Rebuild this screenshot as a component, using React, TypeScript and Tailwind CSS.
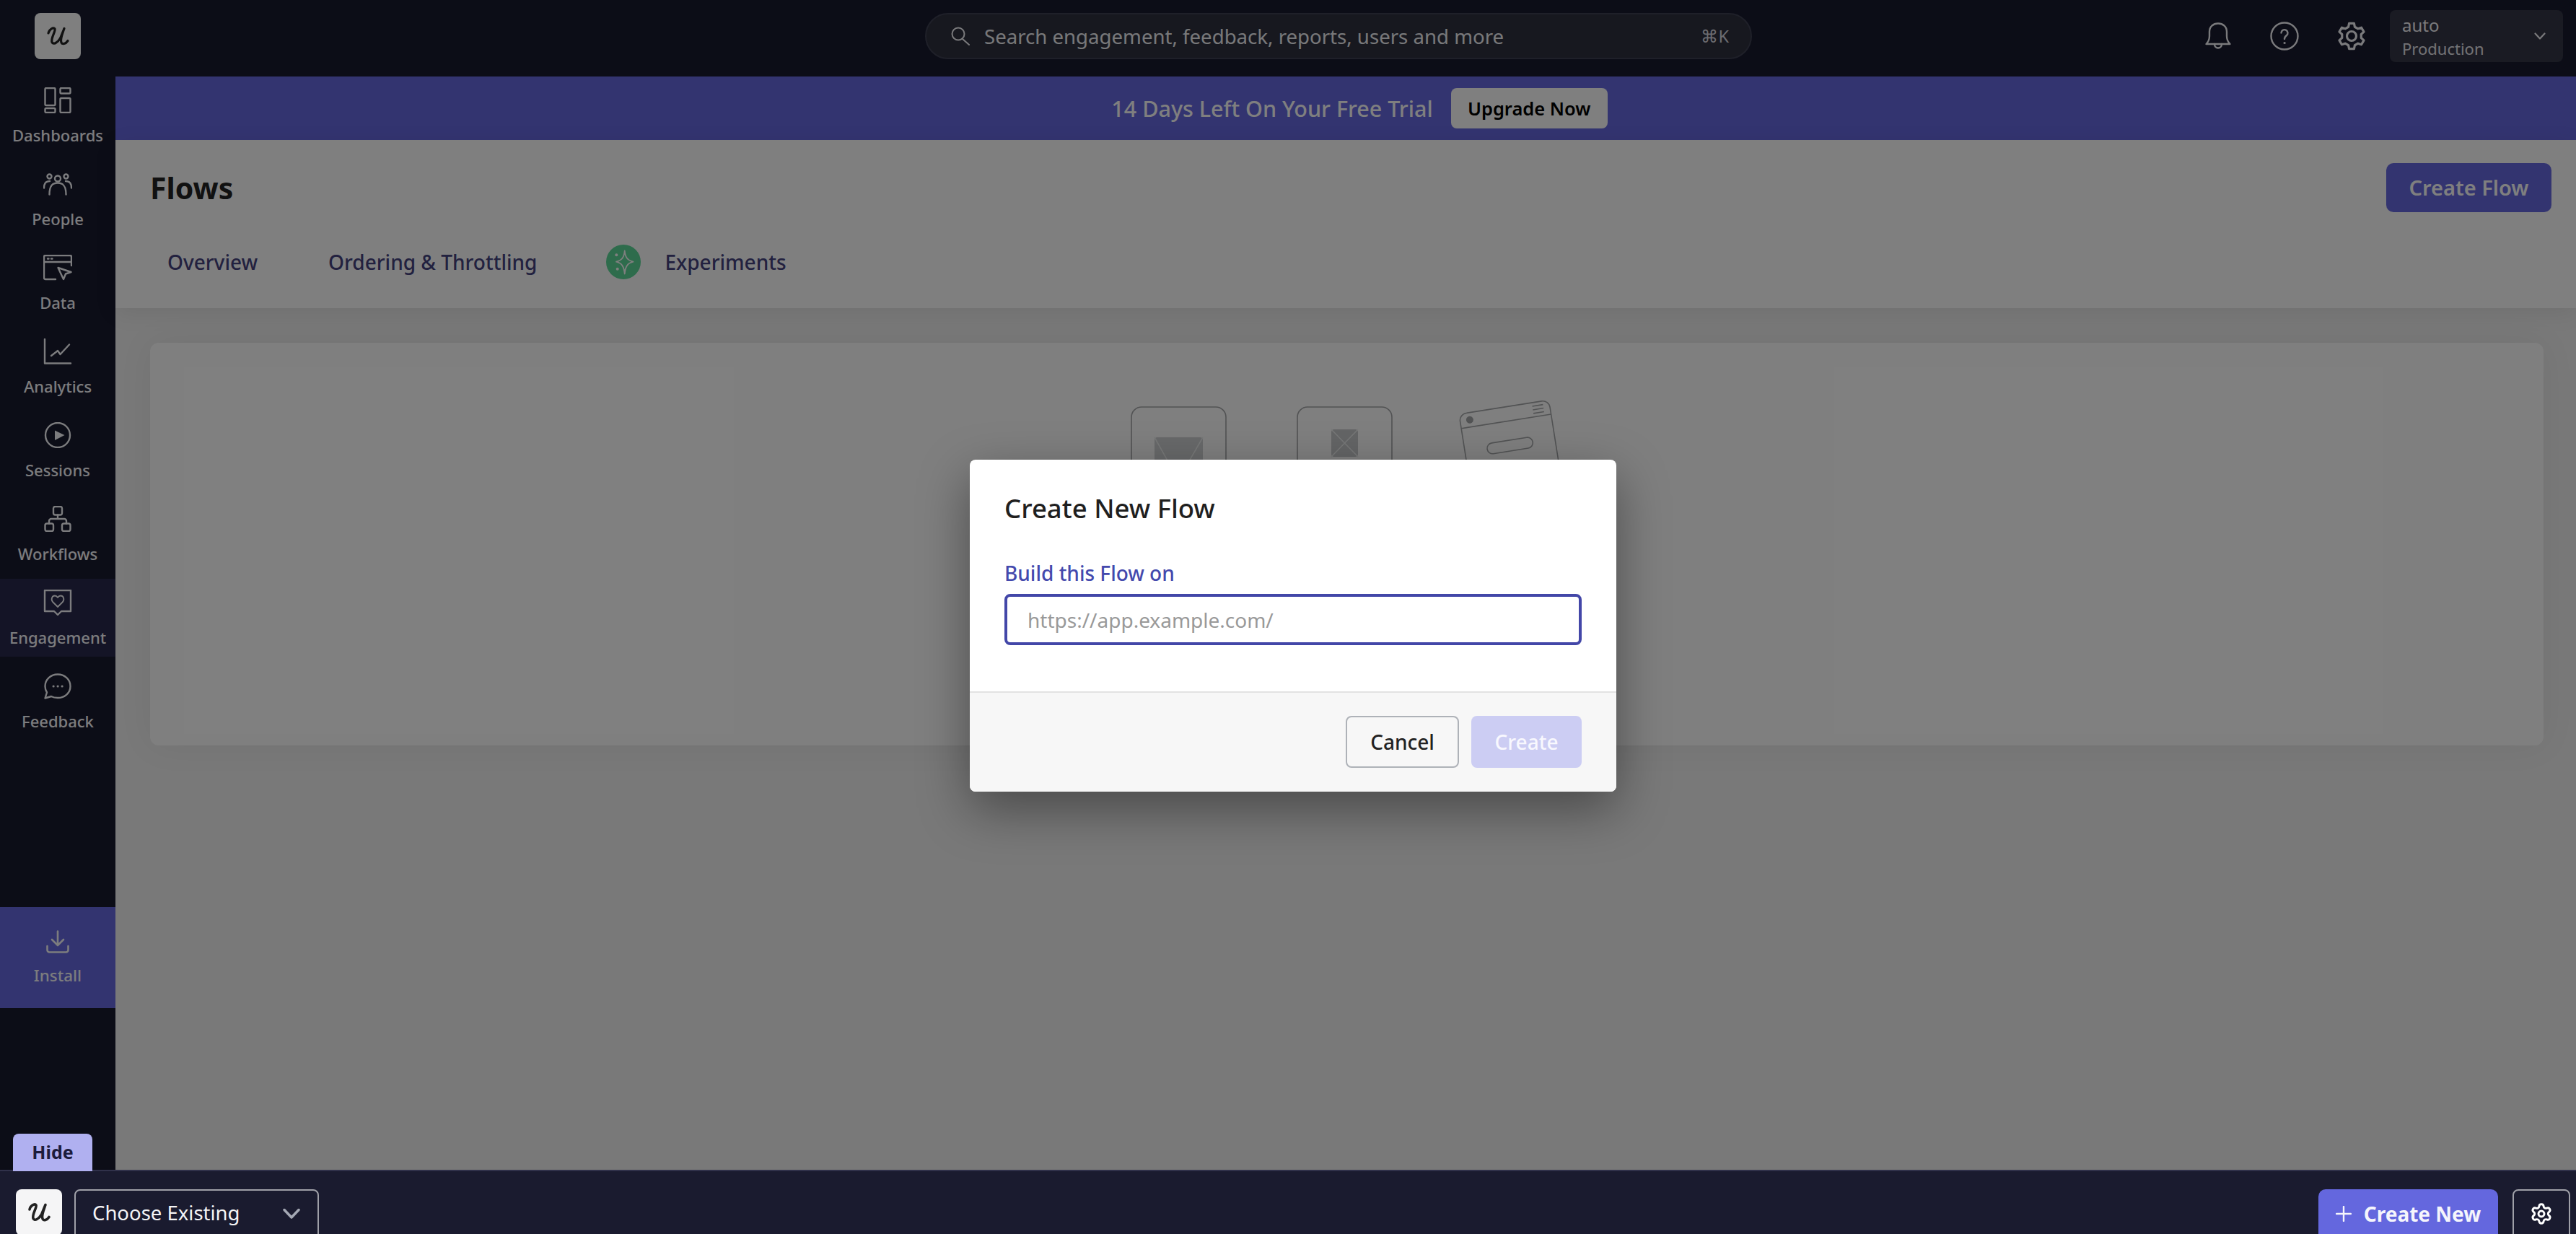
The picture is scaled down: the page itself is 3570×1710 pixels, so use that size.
import { Settings } from 'lucide-react';
import type { ReactNode } from 'react';

function ULogo({ className, strokeWidth = 3 }: { className?: string; strokeWidth?: number }) {
  return (
    <svg viewBox="0 0 64 64" className={className} fill="none" stroke="currentColor" strokeWidth={strokeWidth} strokeLinecap="round" strokeLinejoin="round">
      <path d="M19 28C20 23 26 19 28 22C29.500 25 22 35 24 40.500C26 44.500 32 41 35.500 35L41 21.500C38 30 35 37 37 41C38.500 44 43 43 46 38.500" />
    </svg>
  );
}

// six flat teeth, same shape as the gear in the top bar
function gearPath() {
  const point = (deg: number, r: number) => {
    const a = (deg * Math.PI) / 180;
    return `${(20 + r * Math.cos(a)).toFixed(2)} ${(20 + r * Math.sin(a)).toFixed(2)}`;
  };
  const parts: string[] = [];
  for (let i = 0; i < 6; i++) {
    const a = -90 + 60 * i;
    parts.push(point(a - 19, 13.5), point(a - 11, 18), point(a + 11, 18), point(a + 19, 13.5));
  }
  return `M${parts.join('L')}Z`;
}

function GearIcon() {
  return (
    <svg viewBox="0 0 40 40" className="w-10 h-10" fill="none" stroke="currentColor" strokeWidth="3.2" strokeLinejoin="round">
      <path d={gearPath()} />
      <circle cx="20" cy="20" r="6.500" />
    </svg>
  );
}

function NavIcon({ children }: { children: ReactNode }) {
  return (
    <svg viewBox="0 0 40 36" className="w-10 h-9" fill="none" stroke="currentColor" strokeWidth="2.4" strokeLinecap="round" strokeLinejoin="round">
      {children}
    </svg>
  );
}

const navItems: { label: string; active?: boolean; icon: ReactNode }[] = [
  {
    label: 'Dashboards',
    icon: (
      <>
        <rect x="2.5" y="1" width="14" height="24" rx="1.5" />
        <rect x="23.5" y="1" width="14" height="7.5" rx="1.5" />
        <rect x="2.5" y="29" width="14" height="6" rx="1.5" />
        <rect x="23.5" y="15" width="14" height="20" rx="1.5" />
      </>
    ),
  },
  {
    label: 'People',
    icon: (
      <>
        <circle cx="20" cy="10.5" r="4" />
        <circle cx="8.5" cy="7.5" r="3" />
        <circle cx="31.5" cy="7.5" r="3" />
        <path d="M8.5 32.5C8.5 20 13 16.5 20 16.5C27 16.5 31.5 20 31.5 32.5" />
        <path d="M1 23.5C1 17 4 14 9 14" />
        <path d="M39 23.5C39 17 36 14 31 14" />
      </>
    ),
  },
  {
    label: 'Data',
    icon: (
      <>
        <path d="M17 34H3a2 2 0 0 1-2-2V3a2 2 0 0 1 2-2H37a2 2 0 0 1 2 2V15" />
        <path d="M1 10H39" />
        <path d="M6 5.5H7.5M11 5.5H12.5" />
        <path d="M20.5 18L38.5 24L31 26.5L28 34Z" />
      </>
    ),
  },
  {
    label: 'Analytics',
    icon: (
      <>
        <path d="M2 1V34.5H38" />
        <path d="M11 24L20 17L23.5 22L36 8.5" />
      </>
    ),
  },
  {
    label: 'Sessions',
    icon: (
      <>
        <circle cx="20" cy="18" r="17" />
        <path d="M16 11.5L29.5 18L16 25Z" fill="currentColor" stroke="none" />
      </>
    ),
  },
  {
    label: 'Workflows',
    icon: (
      <>
        <rect x="14" y="1" width="12" height="11.5" rx="2.5" />
        <rect x="2.5" y="24.5" width="11.5" height="10.5" rx="2.5" />
        <rect x="26" y="24.5" width="11.5" height="10.5" rx="2.5" />
        <path d="M20 12.5V18M8 24.5V21a3 3 0 0 1 3-3H29a3 3 0 0 1 3 3V24.5" />
      </>
    ),
  },
  {
    label: 'Engagement',
    active: true,
    icon: (
      <>
        <path d="M2 1H38V30H25L20 35L15 30H2Z" />
        <path d="M20 24L13 17C10 13 12.5 8.5 16 8.5C18 8.5 19 9.5 20 11C21 9.5 22 8.5 24 8.5C27.5 8.5 30 13 27 17Z" strokeWidth="1.8" />
      </>
    ),
  },
  {
    label: 'Feedback',
    icon: (
      <>
        <path d="M20 1.5C29.5 1.5 37.5 8.5 37.5 18C37.5 27.5 29.5 34 20 34C16.5 34 13.5 33.4 11 32L2.5 34.5L5 26.5C3.4 24 2.5 21.2 2.5 18C2.5 8.5 10.5 1.5 20 1.5Z" />
        <path d="M14 18H14.2M20 18H20.2M26 18H26.2" strokeWidth="3" />
      </>
    ),
  },
];

function Sidebar() {
  return (
    <aside className="w-[160px] shrink-0 bg-[#181a2e] flex flex-col text-[#f8f8fc]">
      {navItems.map((item) => (
        <div
          key={item.label}
          className={`h-[108px] mb-2 flex flex-col items-center pt-[15px] ${item.active ? 'bg-[#28284c]' : ''}`}
        >
          <NavIcon>{item.icon}</NavIcon>
          <span className="mt-[14px] text-[22px] leading-8 font-medium">{item.label}</span>
        </div>
      ))}
      <div className="mt-[223px] h-[140px] bg-[#6668e0] flex flex-col items-center pt-8">
        <svg viewBox="0 0 32 32" className="w-8 h-8" fill="none" stroke="currentColor" strokeWidth="2.6" strokeLinecap="round" strokeLinejoin="round">
          <path d="M16 1.5V20M8 13L16 21L24 13" />
          <path d="M1.5 22V27.5a3 3 0 0 0 3 3H27.5a3 3 0 0 0 3-3V22" />
        </svg>
        <span className="mt-[15px] text-[22.4px] leading-8 font-medium">Install</span>
      </div>
    </aside>
  );
}

function TopBar() {
  return (
    <header className="h-[106px] shrink-0 bg-[#181a2e] flex items-start pt-[18px] text-[#f4f4f8]">
      <div className="w-[160px] flex justify-center">
        <div className="w-16 h-16 rounded-lg bg-white text-[#222] flex items-center justify-center">
          <ULogo className="w-16 h-16" strokeWidth={3.2} />
        </div>
      </div>
      <div className="ml-[1122px] w-[1146px] h-16 rounded-full bg-[#2e303e] border-2 border-[#3e4052] flex items-center pl-[33px] pr-[30px]">
        <svg viewBox="0 0 28 26" className="w-7 h-[26px] shrink-0" fill="none" stroke="currentColor" strokeWidth="2" strokeLinecap="round">
          <circle cx="11" cy="10" r="8.5" />
          <path d="M17 17L26 25" />
        </svg>
        <span className="ml-[19px] text-[27.6px] leading-9 text-[#f0f0f4]">Search engagement, feedback, reports, users and more</span>
        <span className="ml-auto text-[23.5px] leading-9 text-[#d8d8e0]">⌘K</span>
      </div>
      <div className="ml-auto flex items-center pr-[18px] -mt-1">
        <svg viewBox="0 0 40 40" className="w-10 h-10" fill="none" stroke="currentColor" strokeWidth="2.4" strokeLinecap="round" strokeLinejoin="round">
          <path d="M3.5 31C6.5 28 8 25 8 20V14C8 7 13 2.5 20 2.5C27 2.5 32 7 32 14V20C32 25 33.5 28 36.5 31Z" />
          <path d="M15 31a5 5.500 0 0 0 10 0" />
        </svg>
        <svg viewBox="0 0 40 40" className="w-10 h-10 ml-[52px]" fill="none" stroke="currentColor" strokeWidth="2.4" strokeLinecap="round" strokeLinejoin="round">
          <circle cx="20" cy="20" r="18.5" />
          <path d="M15.5 15.5a4.500 4.500 0 1 1 7.500 3.500C21 20.500 20 21.500 20 24" />
          <path d="M20 29.500H20.200" strokeWidth="3" />
        </svg>
        <div className="ml-[53px]">
          <GearIcon />
        </div>
        <div className="ml-[33px] w-[240px] h-[72px] rounded-lg bg-[#343646] flex items-center pl-[17px] pr-6">
          <div className="flex flex-col">
            <span className="text-[24px] leading-[34px]">auto</span>
            <span className="text-[22px] leading-[30px] text-[#e4e4ea]">Production</span>
          </div>
          <svg viewBox="0 0 16 10" className="ml-auto w-4 h-[10px]" fill="none" stroke="currentColor" strokeWidth="2.2" strokeLinecap="round" strokeLinejoin="round">
            <path d="M1.500 1.500L8 8.500L14.500 1.500" />
          </svg>
        </div>
      </div>
    </header>
  );
}

function Illustration() {
  return (
    <svg viewBox="0 0 600 145" className="w-[600px] h-[145px] overflow-visible" fill="none" stroke="#a4a6a8" strokeWidth="1.6">
      <rect x="1" y="9" width="131" height="200" rx="14" />
      <rect x="33" y="51" width="67" height="94" rx="4" fill="#d0d2d4" stroke="none" />
      <path d="M33 51L66 110L100 51M33 145L66 110L100 145" stroke="#eef0f0" />
      <rect x="231" y="9" width="131" height="200" rx="14" />
      <rect x="278" y="40" width="37" height="38" rx="4" fill="#c8cacc" stroke="none" />
      <path d="M278 40L315 78M315 40L278 78" stroke="#eef0f0" />
      <g transform="rotate(-9 455 19)">
        <rect x="455" y="19" width="126" height="200" rx="10" />
        <path d="M455 39H581" />
        <circle cx="468.500" cy="29" r="5" fill="#a4a6a8" stroke="none" />
        <path d="M557 24H572M557 29H572M557 34H572" />
        <rect x="486" y="65.500" width="64" height="15" rx="7.500" />
      </g>
    </svg>
  );
}

function MainArea() {
  return (
    <main className="flex-1 min-w-0 flex flex-col bg-[#f2f2f2]">
      <div className="h-[88px] shrink-0 bg-[#6668e0] flex items-center justify-center pl-[49px] pr-[4px]">
        <span className="text-[30.5px] leading-10 font-medium text-white ml-[-7px]">14 Days Left On Your Free Trial</span>
        <button className="ml-[25px] h-14 w-[217px] rounded-lg bg-white text-black text-[25.5px] font-semibold">Upgrade Now</button>
      </div>
      <div className="h-[233px] shrink-0 bg-white shadow-[0_6px_30px_rgba(0,0,0,0.08)] relative pt-8 pl-[48px] pr-[34px]">
        <div className="flex items-center justify-between">
          <h1 className="text-[41px] leading-[68px] font-bold text-[#222]">Flows</h1>
          <button className="w-[229px] h-[68px] rounded-[10px] bg-[#6668e0] text-white text-[29px] font-semibold">Create Flow</button>
        </div>
        <nav className="flex items-center mt-[45px] pl-[24px] h-12 text-[28px] font-medium text-[#44427e]">
          <span>Overview</span>
          <span className="ml-[98px]">Ordering &amp; Throttling</span>
          <span className="ml-[96px] w-12 h-12 rounded-full bg-[#5cd898]">
            <svg viewBox="0 0 48 48" className="w-12 h-12" fill="none" stroke="#fff" strokeWidth="1.8" strokeLinejoin="round">
              <path d="M25.700 8.500C26.500 17 29 21.500 37.500 23.700C29 26 26.500 31 25.700 40.500C24.900 31 22.500 26 14 23.700C22.500 21.500 24.900 17 25.700 8.500Z" />
              <circle cx="14.300" cy="14.300" r="2" fill="#fff" stroke="none" />
              <circle cx="15.700" cy="33.700" r="2" fill="#fff" stroke="none" />
            </svg>
          </span>
          <span className="ml-[33px]">Experiments</span>
        </nav>
      </div>
      <div className="pt-12 pl-[48px] pr-[45px]">
        <div className="h-[558px] rounded-xl bg-white shadow-[0_0_50px_rgba(0,0,0,0.06)] flex justify-center pt-20 overflow-hidden">
          <Illustration />
        </div>
      </div>
    </main>
  );
}

function CreateFlowModal() {
  return (
    <div className="absolute left-[1344px] top-[637px] z-20 w-[896px] h-[460px] rounded-lg bg-white flex flex-col shadow-[0_24px_70px_rgba(0,0,0,0.4)] overflow-hidden">
      <div className="h-[323px] border-b-2 border-[#e2e3e3] pt-[41px] px-12">
        <h2 className="text-[36.5px] leading-[52px] font-medium text-[#1f1f1f]">Create New Flow</h2>
        <label className="block mt-[44px] text-[28px] leading-10 font-medium text-[#4449ad]">Build this Flow on</label>
        <input
          readOnly
          placeholder="https://app.example.com/"
          className="mt-[9px] w-[800px] h-[71px] rounded-lg border-4 border-[#4347a8] bg-white px-7 text-[28px] text-[#222] outline-none placeholder:text-[#999]"
        />
      </div>
      <div className="flex-1 bg-[#f7f7f7] flex items-start justify-end gap-[17px] pt-8 pr-12">
        <button className="w-[157px] h-[72px] rounded-lg border-2 border-[#aeb2b8] text-[28px] font-medium text-[#222]">Cancel</button>
        <button className="w-[153px] h-[72px] rounded-lg bg-[#cccdf3] text-[28px] font-medium text-[#f8f8fe]">Create</button>
      </div>
    </div>
  );
}

function BottomBar() {
  return (
    <footer className="relative z-20 h-[89px] shrink-0 bg-[#1a1b2f] border-t-2 border-[#30314a] flex items-start pt-[25px] pl-[22px] pr-2 text-white overflow-visible">
      <button className="absolute left-[18px] bottom-full h-[52px] w-[110px] rounded-t-lg bg-[#b0b0f0] text-[#1c1c3c] text-[25px] font-bold">Hide</button>
      <div className="w-16 h-16 rounded-lg bg-[#f5f5f6] text-[#222] shrink-0">
        <ULogo className="w-16 h-16" strokeWidth={3.6} />
      </div>
      <div className="ml-[17px] w-[339px] h-[72px] rounded-lg border-2 border-[#9fa0a8] flex items-center pl-[23px] pr-6">
        <span className="text-[27.5px] leading-10 -mt-[6px] text-[#f4f4f6]">Choose Existing</span>
        <svg viewBox="0 0 24 16" className="ml-auto w-6 h-4 -mt-1" fill="none" stroke="#a4a8b4" strokeWidth="3.500" strokeLinecap="round" strokeLinejoin="round">
          <path d="M2 2.500L12 13L22 2.500" />
        </svg>
      </div>
      <button className="ml-auto w-[249px] h-[72px] rounded-[10px] bg-[#6467de] flex items-center justify-center gap-[17px] pb-1 text-[28px] font-bold text-[#f5f5fc]">
        <svg viewBox="0 0 22 22" className="w-[22px] h-[22px]" fill="none" stroke="currentColor" strokeWidth="2.400" strokeLinecap="round">
          <path d="M11 1V21M1 11H21" />
        </svg>
        Create New
      </button>
      <div className="ml-5 w-20 h-[72px] rounded-lg border-2 border-[#9fa0a8] flex items-center justify-center pb-1">
        <Settings className="w-8 h-8" strokeWidth={2.2} />
      </div>
    </footer>
  );
}

export default function App() {
  return (
    <div className="relative w-[3570px] h-[1710px] overflow-hidden flex flex-col font-['Noto_Sans',sans-serif]">
      <TopBar />
      <div className="flex-1 min-h-0 flex">
        <Sidebar />
        <MainArea />
      </div>
      <BottomBar />
      <div className="absolute inset-0 z-10 bg-black/50" />
      <CreateFlowModal />
    </div>
  );
}
